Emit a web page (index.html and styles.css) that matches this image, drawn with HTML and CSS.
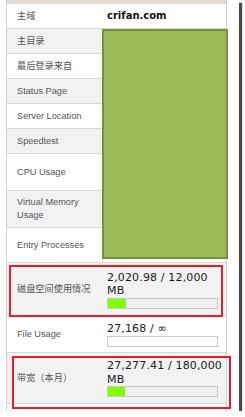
FILE: index.html
```html
<!DOCTYPE html>
<html>
<head>
<meta charset="utf-8">
<link rel="stylesheet" href="styles.css">
</head>
<body>
<div class="shot">
  <div class="table">
    <div class="topbar"></div>
    <div class="row h25"><div class="label">主域</div><div class="value"><b class="domain">crifan.com</b></div></div>
    <div class="row h25 alt"><div class="label">主目录</div><div class="value"></div></div>
    <div class="row h25"><div class="label">最后登录来自</div><div class="value"></div></div>
    <div class="row h25 alt"><div class="label">Status Page</div><div class="value"></div></div>
    <div class="row h25"><div class="label">Server Location</div><div class="value"></div></div>
    <div class="row h25 alt"><div class="label">Speedtest</div><div class="value"></div></div>
    <div class="row h37"><div class="label">CPU Usage</div><div class="value"></div></div>
    <div class="row h37 alt"><div class="label">Virtual Memory Usage</div><div class="value"></div></div>
    <div class="row h35"><div class="label">Entry Processes</div><div class="value"></div></div>
    <div class="row h54 alt"><div class="label">磁盘空间使用情况</div><div class="value"><div class="num">2,020.98 / 12,000 MB</div><div class="bar"><div class="fill" style="width:16.8%"></div></div></div></div>
    <div class="row h36"><div class="label">File Usage</div><div class="value"><div class="num">27,168 / ∞</div><div class="bar white"></div></div></div>
    <div class="row h51 alt"><div class="label">带宽（本月）</div><div class="value"><div class="num">27,277.41 / 180,000 MB</div><div class="bar"><div class="fill" style="width:15.2%"></div></div></div></div>
  </div>
  <div class="redact"></div>
  <div class="mark mark1"></div>
  <div class="mark mark2"></div>
</div>
</body>
</html>
```

FILE: styles.css
```css
html, body {
  margin: 0;
  padding: 0;
  background: #fff;
}
.shot {
  position: relative;
  width: 239px;
  height: 411px;
  background: #fff;
  box-shadow: 3px 3px 1px #4a4a4a;
  padding-left: 6px;
  box-sizing: border-box;
  display: flex;
  flex-direction: column;
}
.table {
  width: 221px;
  flex: 1;
  border-left: 1px solid #d2d2d2;
  border-right: 1px solid #d2d2d2;
  box-sizing: border-box;
  display: flex;
  flex-direction: column;
}
.topbar {
  height: 4px;
  background: #e2dad3;
  flex: none;
}
.row {
  display: grid;
  grid-template-columns: 95px 1fr;
  border-bottom: 1px solid #d9d9d9;
  box-sizing: border-box;
  flex: none;
  background: #fff;
}
.row.alt { background: #f2f2f2; }
.h25 { height: 25px; }
.h35 { height: 35px; }
.h36 { height: 36px; }
.h37 { height: 37px; }
.h51 { height: 51px; }
.h54 { height: 54px; }
.label {
  display: flex;
  align-items: center;
  padding-left: 10px;
  padding-right: 4px;
  font-family: "Liberation Sans", "Noto Sans CJK SC", sans-serif;
  font-size: 9.2px;
  line-height: 12.7px;
  color: #555;
}
.value {
  display: flex;
  flex-direction: column;
  justify-content: center;
  padding-left: 5px;
  font-family: "DejaVu Sans", sans-serif;
  font-size: 11px;
  line-height: 13.5px;
  letter-spacing: 0.15px;
  color: #1a1a1a;
}
.domain {
  font-size: 10px;
  font-weight: bold;
  letter-spacing: 0;
  color: #111;
}
.num {
  width: 118px;
  white-space: normal;
}
.bar {
  width: 111px;
  height: 11px;
  border: 1px solid #c9c9c9;
  background: #efefef;
  box-sizing: border-box;
  flex: none;
}
.bar.white { background: #fff; }
.fill {
  height: 100%;
  background: #80ff00;
}
.redact {
  position: absolute;
  left: 102px;
  top: 29px;
  width: 126px;
  height: 230px;
  background: #9bbb59;
  border: 2px solid #76923c;
  box-sizing: border-box;
}
.mark {
  position: absolute;
  border: 2px solid #e41e2a;
  box-sizing: border-box;
}
.mark1 { left: 9px; top: 265px; width: 214px; height: 52px; }
.mark2 { left: 12px; top: 356px; width: 219px; height: 53px; }
```
